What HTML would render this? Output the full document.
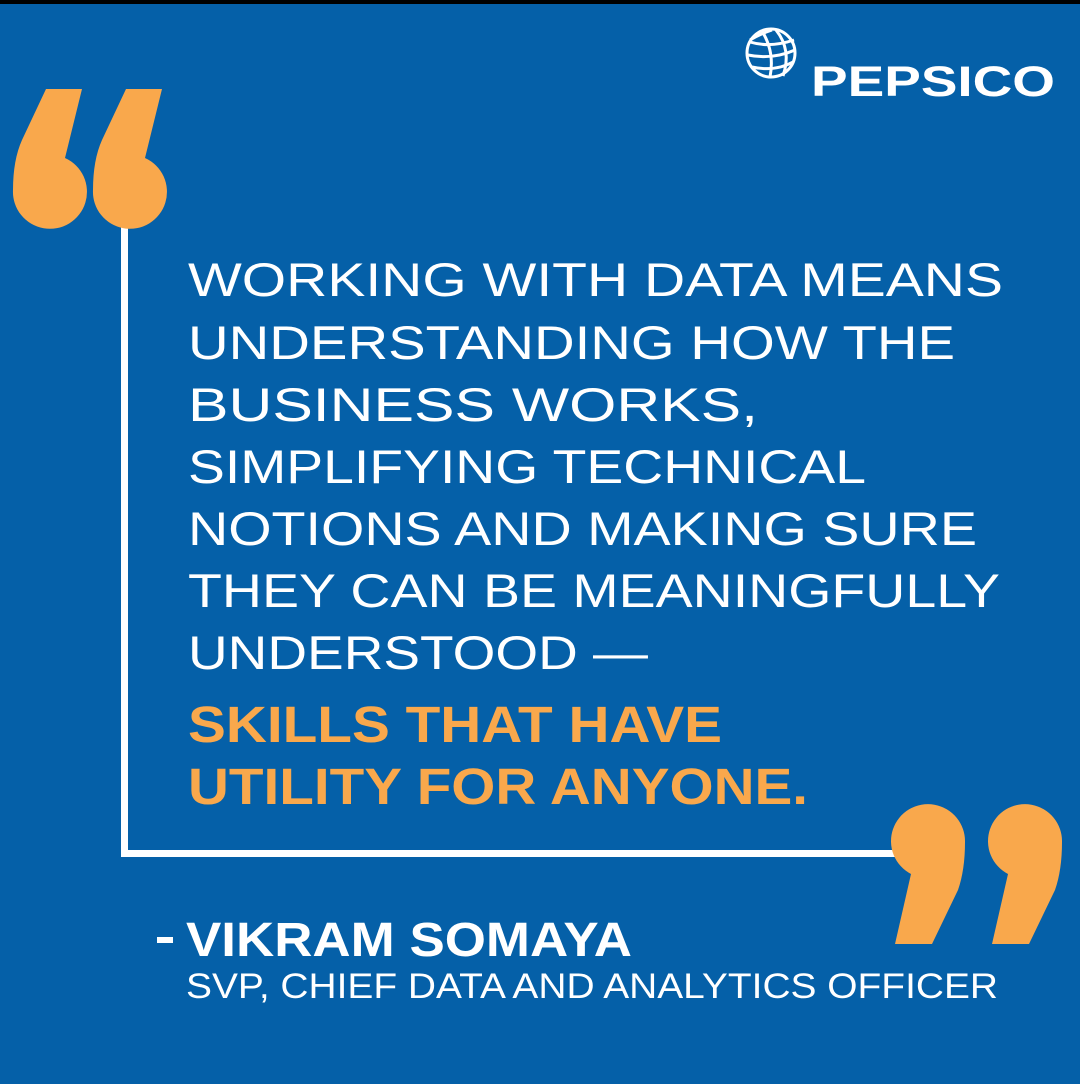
<!DOCTYPE html>
<html><head><meta charset="utf-8"><style>
html,body{margin:0;padding:0;background:#0560a8;}
svg{display:block}
</style></head><body>
<svg width="1080" height="1084" viewBox="0 0 1080 1084" xmlns="http://www.w3.org/2000/svg">
<rect width="1080" height="1084" fill="#0560a8"/>
<rect width="1080" height="4" fill="#000"/>
<!-- white frame line -->
<rect x="121" y="226" width="7" height="631" fill="#fff"/>
<rect x="121" y="850" width="775" height="7" fill="#fff"/>
<!-- opening quotes -->
<g fill="#f9a84c">
<path d="M46 89 L82 89 L65 158 A37 37 0 1 1 13 190 Q13 160 22 140 Z"/>
<path d="M126 89 L162 89 L145 158 A37 37 0 1 1 93 190 Q93 160 102 140 Z"/>
<!-- closing quotes -->
<path d="M932 944 L895 944 L911 874 A37 37 0 1 1 965 842 Q965 870 958 890 Z"/>
<path d="M1029 944 L992 944 L1008 874 A37 37 0 1 1 1062 842 Q1062 870 1055 890 Z"/>
</g>
<!-- globe logo -->
<g fill="none" stroke="#fff" stroke-width="3">
<circle cx="771" cy="53" r="24"/>
<path d="M750 42 Q770 48 794 40"/>
<path d="M748 55 Q772 60 795 50"/>
<path d="M752 67 Q775 72 793 62"/>
<path d="M762 31 Q775 52 770 77"/>
<path d="M776 30 Q792 50 783 76"/>
<path d="M750 40 Q760 34 772 30"/>
</g>
<g font-family="Liberation Sans, sans-serif" fill="#fff">
<text x="811" y="96" font-size="43" font-weight="bold" textLength="244" lengthAdjust="spacingAndGlyphs">PEPSICO</text>
<g font-size="47">
<text x="188" y="296" textLength="815" lengthAdjust="spacingAndGlyphs">WORKING WITH DATA MEANS</text>
<text x="188" y="359" textLength="767" lengthAdjust="spacingAndGlyphs">UNDERSTANDING HOW THE</text>
<text x="188" y="421" textLength="570" lengthAdjust="spacingAndGlyphs">BUSINESS WORKS,</text>
<text x="188" y="483" textLength="678" lengthAdjust="spacingAndGlyphs">SIMPLIFYING TECHNICAL</text>
<text x="188" y="545" textLength="789" lengthAdjust="spacingAndGlyphs">NOTIONS AND MAKING SURE</text>
<text x="188" y="607" textLength="812" lengthAdjust="spacingAndGlyphs">THEY CAN BE MEANINGFULLY</text>
<text x="188" y="669" textLength="460" lengthAdjust="spacingAndGlyphs">UNDERSTOOD —</text>
</g>
<g font-size="51" font-weight="bold" fill="#f9a84c">
<text x="188" y="742" textLength="534" lengthAdjust="spacingAndGlyphs">SKILLS THAT HAVE</text>
<text x="188" y="804" textLength="620" lengthAdjust="spacingAndGlyphs">UTILITY FOR ANYONE.</text>
</g>
<rect x="157" y="937" width="16" height="6"/>
<text x="186" y="956" font-size="48" font-weight="bold" textLength="446" lengthAdjust="spacingAndGlyphs">VIKRAM SOMAYA</text>
<text x="186" y="998" font-size="35" textLength="812" lengthAdjust="spacingAndGlyphs">SVP, CHIEF DATA AND ANALYTICS OFFICER</text>
</g>
</svg>
</body></html>
